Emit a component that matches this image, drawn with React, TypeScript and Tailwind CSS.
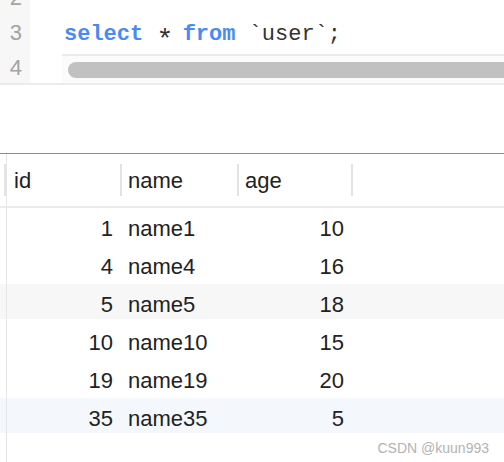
import React from 'react';

const rows = [
  { id: 1, name: 'name1', age: 10, bg: '' },
  { id: 4, name: 'name4', age: 16, bg: '' },
  { id: 5, name: 'name5', age: 18, bg: 'bg-[#f7f7f7]' },
  { id: 10, name: 'name10', age: 15, bg: '' },
  { id: 19, name: 'name19', age: 20, bg: '' },
  { id: 35, name: 'name35', age: 5, bg: 'bg-[#f4f8fd]' },
];

function Sep() {
  return <div className="w-[2px] h-[32px] bg-[#e3e3e3] shrink-0" />;
}

export default function App() {
  return (
    <div className="w-[504px] h-[462px] bg-white overflow-hidden" style={{ fontFamily: '"Liberation Sans", Arial, sans-serif' }}>
      {/* editor */}
      <div className="h-[85px] flex overflow-hidden border-b-2 border-[#ececec]">
        <div className="w-[30px] shrink-0 bg-[#f7f7f7] flex flex-col items-end pr-[8px] -mt-[20px] text-[22px] leading-[35px] text-[#a3a3a3]">
          <div className="h-[35px]">2</div>
          <div className="h-[35px]">3</div>
          <div className="h-[35px]">4</div>
        </div>
        <div className="flex-1 min-w-0 ml-[32px] -mt-[20px] flex flex-col">
          <div className="h-[35px]" />
          <div
            className="h-[35px] leading-[39px] text-[22px] text-[#333] whitespace-nowrap pl-[2px]"
            style={{ fontFamily: '"Liberation Mono", "DejaVu Sans Mono", monospace' }}
          >
            <span className="text-[#4a8af4] font-bold">select</span>{' '}
            <span className="inline-block w-[13px] text-center text-[28px] leading-none translate-y-[8px]">*</span>{' '}
            <span className="text-[#4a8af4] font-bold">from</span> `user`;
          </div>
          <div className="mt-[4px] h-[29px] border-t-2 border-[#ebebeb] bg-[#fbfbfb] overflow-hidden">
            <div className="mt-[6px] ml-[6px] -mr-[20px] h-[16px] rounded-full bg-[#c1c1c1]" />
          </div>
        </div>
      </div>

      <div className="h-[68px]" />
      <div className="h-px bg-[#8c8c8c]" />

      {/* result grid */}
      <div className="relative text-[22px] text-[#222]">
        <div className="absolute left-[6px] top-0 h-[320px] w-px bg-[#e6e6e6]" />
        <div className="h-[54px] flex items-center border-b-2 border-[#ebebeb]">
          <div className="w-[4px] shrink-0" />
          <Sep />
          <div className="w-[114px] shrink-0 pl-[8px]">id</div>
          <Sep />
          <div className="w-[115px] shrink-0 pl-[6px]">name</div>
          <Sep />
          <div className="w-[112px] shrink-0 pl-[6px]">age</div>
          <Sep />
        </div>
        {rows.map((r) => (
          <div key={r.id} className={`h-[35px] mb-[3px] flex items-center pt-[5px] ${r.bg}`}>
            <div className="w-[6px] shrink-0" />
            <div className="w-[114px] shrink-0 text-right pr-[7px]">{r.id}</div>
            <div className="w-[2px] shrink-0" />
            <div className="w-[115px] shrink-0 pl-[6px]">{r.name}</div>
            <div className="w-[2px] shrink-0" />
            <div className="w-[112px] shrink-0 text-right pr-[7px]">{r.age}</div>
          </div>
        ))}
        <div className="flex justify-end pr-[15px] pt-[2px] text-[14px] text-[#b3b3b3]">CSDN @kuun993</div>
      </div>
    </div>
  );
}
